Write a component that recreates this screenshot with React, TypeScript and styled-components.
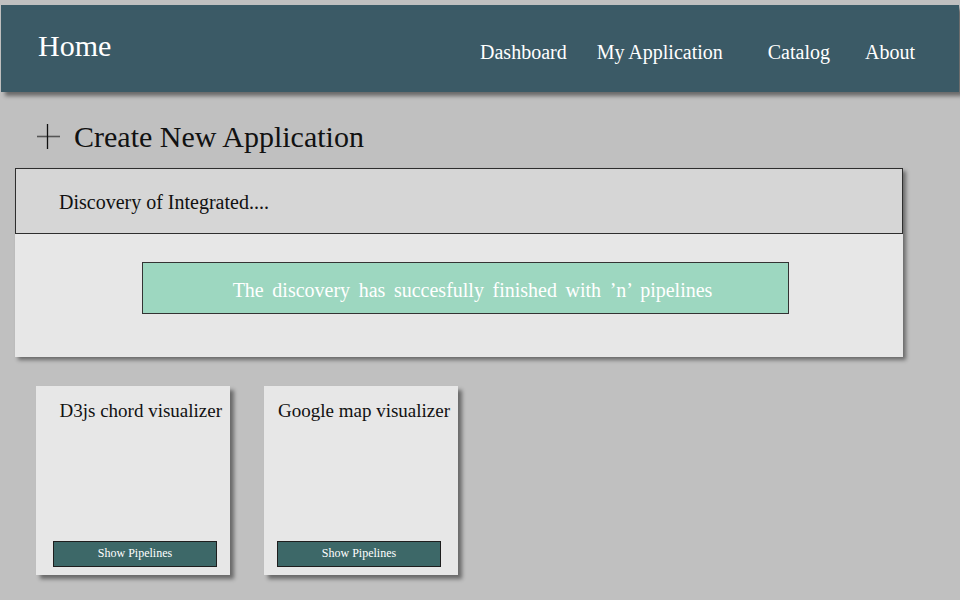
import React from "react";
import styled, { createGlobalStyle } from "styled-components";

const Global = createGlobalStyle`
  html, body { margin: 0; padding: 0; background: #c0c0c0; }
  body { font-family: "Liberation Serif", "Times New Roman", serif; }
  * { box-sizing: border-box; }
`;

const Page = styled.div`
  width: 960px;
  height: 600px;
  overflow: hidden;
  padding: 5px 1px 0 1px;
  background: #c0c0c0;
`;

const Header = styled.header`
  height: 87px;
  width: 958px;
  background: #3b5a66;
  box-shadow: 4px 4px 4px rgba(0, 0, 0, 0.45);
  display: flex;
  align-items: flex-start;
  padding-left: 37px;
  color: #ffffff;
`;

const Brand = styled.div`
  font-size: 30px;
  line-height: 34px;
  margin-top: 24px;
  flex: 1;
`;

const Nav = styled.nav`
  display: flex;
  margin-top: 36px;
  padding-right: 44px;
`;

const NavItem = styled.a<{ $ml: number }>`
  font-size: 20px;
  line-height: 23px;
  color: #ffffff;
  text-decoration: none;
  margin-left: ${(p) => p.$ml}px;
`;

const TitleRow = styled.div`
  display: flex;
  align-items: center;
  margin: 25px 0 0 35px;
  height: 40px;
`;

const Title = styled.h1`
  margin: 0 0 0 12px;
  font-size: 30px;
  font-weight: normal;
  color: #111;
  line-height: 34px;
`;

const Panel = styled.section`
  margin: 11px 0 0 14px;
  width: 888px;
  background: #e7e7e7;
  box-shadow: 3px 3px 4px rgba(0, 0, 0, 0.45);
`;

const PanelHead = styled.div`
  height: 66px;
  background: #d6d6d6;
  border: 1px solid #2e2e2e;
  display: flex;
  align-items: center;
  padding: 2px 0 0 43px;
  font-size: 20px;
  color: #111;
`;

const PanelBody = styled.div`
  height: 123px;
  padding: 28px 0 0 127px;
`;

const Banner = styled.div`
  width: 647px;
  height: 52px;
  background: #9dd7c0;
  border: 1px solid #333;
  display: flex;
  align-items: center;
  justify-content: center;
  padding: 5px 0 0 14px;
  color: #ffffff;
  font-size: 20px;
  word-spacing: 3.6px;
`;

const Cards = styled.div`
  display: flex;
  gap: 34px;
  margin: 29px 0 0 35px;
`;

const Card = styled.div`
  width: 194px;
  height: 189px;
  background: #e7e7e7;
  box-shadow: 4px 4px 4px rgba(0, 0, 0, 0.45);
  display: flex;
  flex-direction: column;
  padding: 13px 8px 8px 0;
`;

const CardTitle = styled.div`
  font-size: 19px;
  line-height: 24px;
  color: #111;
  text-align: right;
  flex: 1;
`;

const ShowButton = styled.button<{ $shift: number }>`
  width: 164px;
  height: 26px;
  margin-left: ${(p) => 15 + p.$shift}px;
  background: #3d6868;
  border: 1px solid #1e1e1e;
  color: #ffffff;
  font-family: "Liberation Serif", "Times New Roman", serif;
  font-size: 12px;
  padding: 0 0 2px;
  cursor: pointer;
`;

const PlusIcon = () => (
  <svg width="26" height="26" viewBox="0 0 26 26">
    <line x1="1" y1="12.5" x2="24" y2="12.5" stroke="#555" strokeWidth="1.6" />
    <line x1="11.5" y1="0" x2="11.5" y2="25" stroke="#111" strokeWidth="1.3" />
  </svg>
);

const navItems: [string, number][] = [
  ["Dashboard", 0],
  ["My Application", 30],
  ["Catalog", 45],
  ["About", 35],
];

const cards: [string, number][] = [
  ["D3js chord visualizer", 2],
  ["Google map visualizer", -2],
];

export default function App() {
  return (
    <Page>
      <Global />
      <Header>
        <Brand>Home</Brand>
        <Nav>
          {navItems.map(([label, ml]) => (
            <NavItem key={label} $ml={ml}>
              {label}
            </NavItem>
          ))}
        </Nav>
      </Header>
      <TitleRow>
        <PlusIcon />
        <Title>Create New Application</Title>
      </TitleRow>
      <Panel>
        <PanelHead>Discovery of Integrated....</PanelHead>
        <PanelBody>
          <Banner>The discovery has succesfully finished with ’n’ pipelines</Banner>
        </PanelBody>
      </Panel>
      <Cards>
        {cards.map(([title, shift]) => (
          <Card key={title}>
            <CardTitle>{title}</CardTitle>
            <ShowButton $shift={shift}>Show Pipelines</ShowButton>
          </Card>
        ))}
      </Cards>
    </Page>
  );
}
